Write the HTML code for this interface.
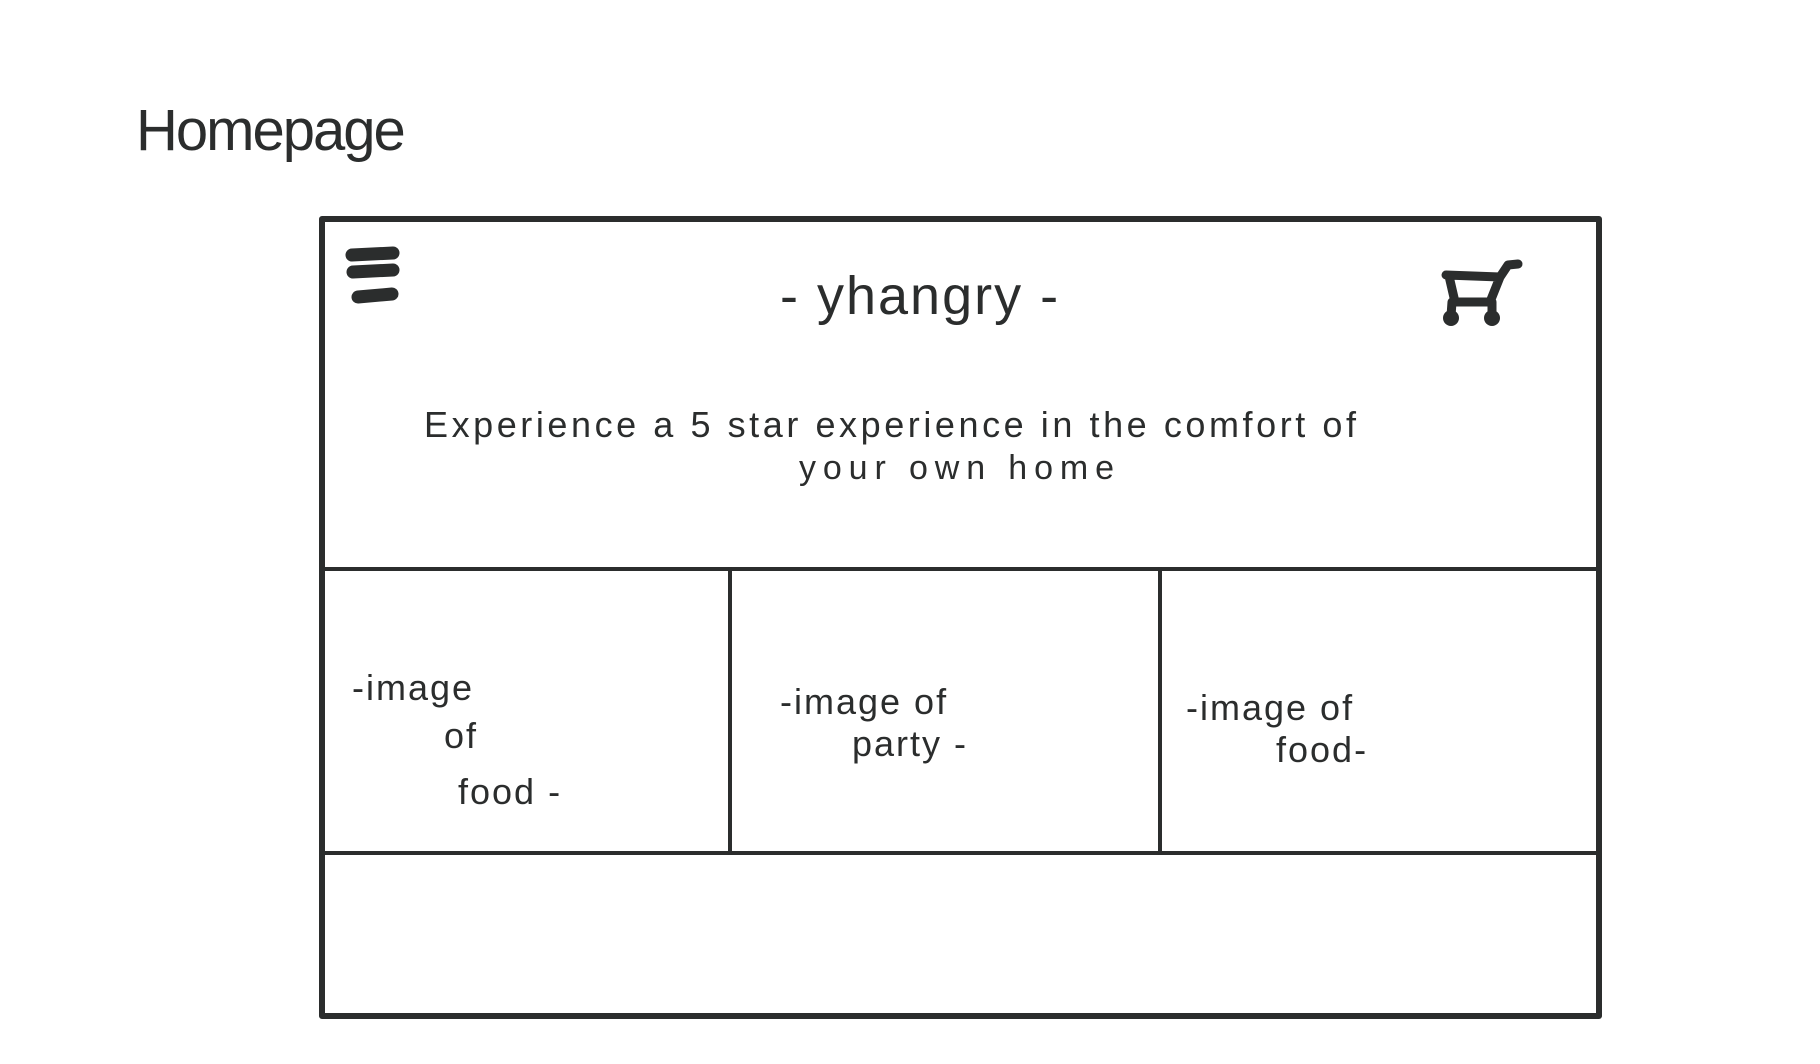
<!DOCTYPE html>
<html><head><meta charset="utf-8"><style>
html,body{margin:0;padding:0;background:#fff;}
body{width:1820px;height:1064px;overflow:hidden;}
svg{display:block}
text{font-family:"Liberation Sans",sans-serif;fill:#2b2d2d;}
</style></head><body>
<svg width="1820" height="1064" viewBox="0 0 1820 1064">
<text x="136" y="150" font-size="58" letter-spacing="-2">Homepage</text>
<g fill="none" stroke="#2b2d2d" stroke-linecap="round" stroke-linejoin="round">
<rect x="322" y="219" width="1277" height="797" stroke-width="6"/>
<line x1="324" y1="569" x2="1597" y2="569" stroke-width="4"/>
<line x1="324" y1="853" x2="1597" y2="853" stroke-width="4"/>
<line x1="730" y1="569" x2="730" y2="853" stroke-width="4"/>
<line x1="1160" y1="569" x2="1160" y2="853" stroke-width="4"/>
<g stroke-width="13">
<path d="M352 255 L393 253"/>
<path d="M353 272 L393 270"/>
<path d="M358 297 L392 294"/>
</g>
<g stroke-width="9">
<path d="M1446 275 L1500 277 M1449 276 L1455 302 L1490 302 L1500 277 L1508 265 L1518 264"/>
<path d="M1452 302 L1451 316 M1492 302 L1492 316"/>
</g>
</g>
<circle cx="1451" cy="318" r="8" fill="#2b2d2d"/>
<circle cx="1492" cy="318" r="8" fill="#2b2d2d"/>
<text x="780" y="314" font-size="54" letter-spacing="2">- yhangry -</text>
<text x="424" y="437" font-size="36" letter-spacing="4" textLength="936" lengthAdjust="spacing">Experience a 5 star experience in the comfort of</text>
<text x="799" y="479" font-size="34" letter-spacing="6" textLength="321" lengthAdjust="spacing">your own home</text>
<g font-size="36" letter-spacing="2">
<text x="352" y="700">-image</text>
<text x="444" y="748">of</text>
<text x="458" y="804">food -</text>
<text x="780" y="714">-image of</text>
<text x="852" y="756">party -</text>
<text x="1186" y="720">-image of</text>
<text x="1276" y="762">food-</text>
</g>
</svg>
</body></html>
